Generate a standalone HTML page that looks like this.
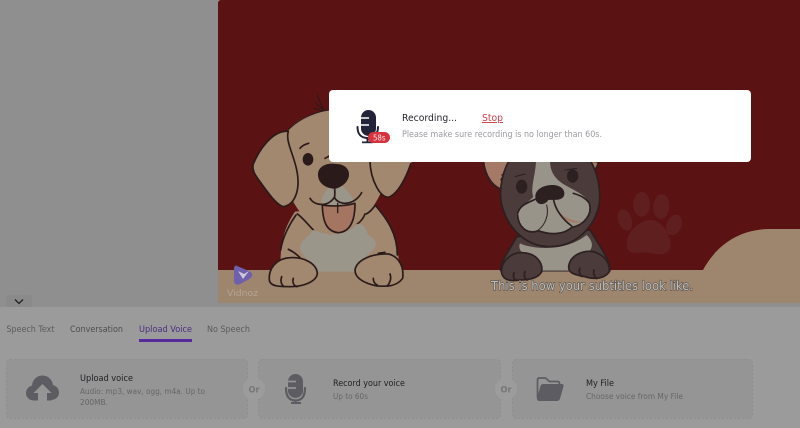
<!DOCTYPE html>
<html lang="en">
<head>
<meta charset="utf-8">
<title>Recording</title>
<style>
html,body{margin:0;padding:0;width:800px;height:428px;overflow:hidden;background:#9b9b9b}
svg{display:block;position:absolute;left:0;top:0}
text{font-family:"DejaVu Sans","Liberation Sans",sans-serif}
</style>
</head>
<body>
<svg width="800" height="428" viewBox="0 0 800 428" xmlns="http://www.w3.org/2000/svg">
<rect width="800" height="428" fill="#9b9b9b"/>
<rect width="800" height="307" fill="#8f8f8f"/>
<rect x="218" y="0" width="590" height="303" rx="3" fill="#5a1212"/>
<path d="M218 270H703C716 246 738 230 768 229H800V303H221Q218 303 218 300Z" fill="#9e856d"/>

<!-- paw print -->
<g transform="translate(470 140) scale(.3333)" fill="#601f1f">
<path d="M470 310C472 270 515 238 545 240C580 245 602 285 602 315C600 345 565 347 535 338C505 335 470 350 470 310Z"/>
<ellipse cx="465" cy="240" rx="20" ry="33" transform="rotate(-20 465 240)"/>
<ellipse cx="515" cy="193" rx="25" ry="37"/>
<ellipse cx="574" cy="200" rx="24" ry="37" transform="rotate(5 574 200)"/>
<ellipse cx="612" cy="255" rx="22" ry="32" transform="rotate(22 612 255)"/>
</g>

<!-- dog 1 -->
<g transform="translate(240 90) scale(.3333)" stroke="#2b1a1a" stroke-width="5" stroke-linejoin="round" stroke-linecap="round">
<path d="M165 365C135 410 118 455 122 545H478C478 450 445 385 405 345Z" fill="#a1886f" stroke="none"/>
<path d="M122 480C128 440 150 400 168 375M405 345C440 385 472 430 472 495" fill="none"/>
<path d="M140 125C175 80 235 60 300 60C370 62 430 100 450 170C455 250 420 330 380 375C345 425 260 430 215 400C180 375 150 330 135 270C120 220 122 160 140 125Z" fill="#a1886f" stroke="none"/>
<path d="M140 125C175 85 225 68 262 60" fill="none" stroke-width="3"/>
<path d="M145 124C135 155 165 200 172 250C180 300 165 345 130 350C110 345 85 310 60 275C45 255 35 240 40 222C55 185 95 120 145 124Z" fill="#a1886f"/>
<path d="M390 215C392 270 420 322 445 322C475 312 505 255 515 215L470 130L400 130Z" fill="#a1886f" stroke="none"/>
<path d="M390 215C392 270 420 322 445 322C475 312 500 258 512 222" fill="none"/>
<path d="M172 372C190 385 205 405 220 420M378 372C395 365 400 350 408 345M375 372C370 385 362 395 352 402" fill="none"/>
<path d="M232 15C238 30 245 48 252 60M225 38L250 58M222 55L250 62" fill="none" stroke-width="3"/>
<path d="M180 175C188 165 198 162 206 160" fill="none"/>
<ellipse cx="204" cy="208" rx="16" ry="19" fill="#2b1a1a" stroke="none"/>
<path d="M268 198L255 205" fill="none"/>
<path d="M270 288C255 305 240 325 248 345H345C340 320 325 305 305 285C298 295 285 300 270 288Z" fill="#9a9689" stroke="none"/>
<path d="M218 420C240 425 265 440 300 430C330 425 345 410 352 402C365 400 375 410 382 425C380 440 405 440 408 460C405 490 370 490 345 545H230C215 510 180 500 180 470C185 445 210 440 218 420Z" fill="#9a9689" stroke="none"/>
<path d="M247 345C248 395 260 425 295 428C335 425 345 385 345 340C320 348 270 350 247 345Z" fill="#a47560"/>
<path d="M293 340V368" fill="none" stroke-width="4"/>
<path d="M210 325C225 350 265 350 283 322C298 350 345 345 365 308" fill="none"/>
<path d="M284 295C285 310 285 318 283 325" fill="none"/>
<path d="M234 250C238 225 265 218 290 222C315 222 332 240 326 262C318 285 295 295 284 296C258 295 232 280 234 250Z" fill="#2b1a1a" stroke="none"/>
<path d="M88 570C85 535 110 505 150 503C190 500 230 520 232 550C230 575 190 590 150 590C120 590 90 590 88 570Z" fill="#a1886f"/>
<path d="M125 560C120 575 125 585 132 590M160 565C155 580 165 590 172 590" fill="none"/>
<path d="M145 478C160 485 172 495 180 503" fill="none"/>
<path d="M345 540C350 510 395 490 445 492C480 500 492 535 488 565C470 590 440 590 410 588C375 580 345 565 345 540Z" fill="#a1886f"/>
<path d="M400 565C400 575 405 582 412 585M450 552C455 565 450 578 442 588" fill="none"/>
<path d="M415 490L435 487" fill="none"/>
</g>

<!-- dog 2 -->
<g transform="translate(470 140) scale(.3333)" stroke="#2c2020" stroke-width="5" stroke-linejoin="round" stroke-linecap="round">
<path d="M40 60C45 110 70 145 105 150L125 60Z" fill="#a47a66"/>
<path d="M340 60L386 66C380 85 370 100 360 110Z" fill="#a47a66"/>
<path d="M92 120L120 70M95 105L115 95" fill="none" stroke-width="3"/>
<path d="M140 290C120 330 92 360 92 392H420C420 360 390 320 360 270Z" fill="#4b3b3b"/>
<path d="M118 60C90 110 85 170 100 210C120 270 170 320 240 320C320 320 375 260 388 190C392 150 385 100 360 60Z" fill="#4b3b3b"/>
<path d="M150 310C180 325 280 340 350 285C375 310 368 330 345 345C310 360 305 395 300 392H215C200 360 185 345 160 340C150 335 145 320 150 310Z" fill="#98948a" stroke="none"/>
<path d="M198 60H240C240 90 250 115 285 135C320 155 345 165 355 185C368 215 345 255 305 262C275 285 225 285 205 272C165 290 138 250 143 220C150 195 180 185 190 170C180 145 198 100 198 60Z" fill="#98948a" stroke="none"/>
<path d="M143 220C150 195 170 190 195 178M143 225C145 260 170 285 205 272C240 285 280 285 305 262C345 255 368 220 358 190C345 170 325 165 310 160" fill="none"/>
<path d="M230 195C238 225 225 255 205 270" fill="none" stroke-width="3"/>
<path d="M250 175C255 210 280 240 335 245C305 255 280 240 262 215C255 205 250 190 250 175Z" fill="#a47a66" stroke="none"/>
<path d="M250 175C255 210 280 240 305 258" fill="none"/>
<ellipse cx="155" cy="140" rx="17" ry="21" fill="#2c2020" stroke="none"/>
<ellipse cx="308" cy="108" rx="17" ry="20" fill="#2c2020" stroke="none"/>
<path d="M135 110L165 102M285 90L320 85" fill="none" stroke-width="3"/>
<path d="M196 170C196 145 225 135 248 135C272 135 288 150 282 168C272 185 245 178 235 180C222 200 195 195 196 170Z" fill="#2c2020" stroke="none"/>
<path d="M95 400C90 365 125 335 160 338C195 340 220 365 215 395C205 415 175 420 150 420C120 425 100 420 95 400Z" fill="#4b3b3b"/>
<path d="M132 398C128 410 132 418 138 420M165 395C160 408 165 418 172 420" fill="none"/>
<path d="M296 380C300 345 340 330 370 335C405 345 420 370 418 395C405 415 375 420 345 410C315 405 295 400 296 380Z" fill="#4b3b3b"/>
<path d="M330 385C325 395 330 405 336 410M372 390C368 402 375 412 380 416" fill="none"/>
</g>

<!-- subtitle -->
<text x="491" y="290" font-size="12.500" fill="#3a3a3a" stroke="#3a3a3a" stroke-width="1.200" textLength="202" lengthAdjust="spacingAndGlyphs" opacity=".7">This is how your subtitles look like.</text>
<text x="491" y="290" font-size="12.500" fill="#bdbdbd" textLength="202" lengthAdjust="spacingAndGlyphs">This is how your subtitles look like.</text>

<!-- watermark -->
<path d="M237 267L249 272C252 274 252 276 249 278L240 283C236 285 235 283 235 280V269C235 267 236 266 237 267Z" fill="#6f60ab" stroke="#6f60ab" stroke-width="2" stroke-linejoin="round"/>
<path d="M238 271L243 279L249 271L244 274Z" fill="#cfc8dc"/>
<text x="227" y="296" font-size="9" fill="#b3a596" textLength="31" lengthAdjust="spacingAndGlyphs">Vidnoz</text>

<!-- collapse tab -->
<path d="M6 307V298Q6 295 9 295H29Q32 295 32 298V307Z" fill="#8a8a8a"/>
<path d="M15 299.500L19 303.500L23 299.500" fill="none" stroke="#222" stroke-width="1.300"/>

<!-- tabs -->
<g font-size="8.800">
<text x="6.500" y="332" fill="#5b5b5b" textLength="48" lengthAdjust="spacingAndGlyphs">Speech Text</text>
<text x="70" y="332" fill="#4d4d4d" textLength="53" lengthAdjust="spacingAndGlyphs">Conversation</text>
<text x="139" y="332" fill="#4b2d7e" textLength="53" lengthAdjust="spacingAndGlyphs">Upload Voice</text>
<text x="207" y="332" fill="#5b5b5b" textLength="43" lengthAdjust="spacingAndGlyphs">No Speech</text>
</g>
<rect x="139" y="339" width="53" height="3" fill="#562a9c"/>

<!-- cards -->
<g fill="#959595" stroke="#8e8e8e" stroke-width="1" stroke-dasharray="2 2">
<rect x="6.500" y="359.500" width="241" height="59" rx="4"/>
<rect x="258.500" y="359.500" width="242" height="59" rx="4"/>
<rect x="512.500" y="359.500" width="240" height="59" rx="4"/>
</g>
<circle cx="254" cy="389" r="11" fill="#9c9c9c"/>
<circle cx="506" cy="389" r="11" fill="#9c9c9c"/>
<text x="248.500" y="392.500" font-size="8.500" font-weight="bold" fill="#767676" textLength="11" lengthAdjust="spacingAndGlyphs">Or</text>
<text x="500.500" y="392.500" font-size="8.500" font-weight="bold" fill="#767676" textLength="11" lengthAdjust="spacingAndGlyphs">Or</text>

<!-- upload icon -->
<g fill="#5c5c62">
<circle cx="42.500" cy="386" r="10.500"/>
<circle cx="33.500" cy="393" r="7.500"/>
<circle cx="51.500" cy="392.500" r="7.500"/>
<rect x="33.500" y="390" width="18" height="10.500"/>
</g>
<path d="M42.500 384L51.500 393H47V401H38V393H33.500Z" fill="#959595"/>
<text x="80" y="381" font-size="8.800" fill="#1e1e22" textLength="53" lengthAdjust="spacingAndGlyphs">Upload voice</text>
<text x="80" y="394" font-size="8" fill="#666" textLength="125" lengthAdjust="spacingAndGlyphs">Audio: mp3, wav, ogg, m4a. Up to</text>
<text x="80" y="405" font-size="8" fill="#666" textLength="28" lengthAdjust="spacingAndGlyphs">200MB.</text>

<!-- record icon -->
<rect x="288" y="374" width="15" height="24" rx="7.500" fill="#5c5c62"/>
<path d="M288 381.500H296M288 388H296" stroke="#959595" stroke-width="1.700" fill="none"/>
<path d="M286 388C286 396 289 400.500 295.500 400.500C302 400.500 305 396 305 388" fill="none" stroke="#5c5c62" stroke-width="2.200" stroke-linecap="round"/>
<rect x="294.500" y="400" width="2" height="3" fill="#5c5c62"/>
<rect x="291" y="402" width="10" height="2" fill="#5c5c62"/>
<text x="333" y="386" font-size="8.800" fill="#1e1e22" textLength="72" lengthAdjust="spacingAndGlyphs">Record your voice</text>
<text x="333" y="399" font-size="8" fill="#666" textLength="35" lengthAdjust="spacingAndGlyphs">Up to 60s</text>

<!-- folder icon -->
<path d="M537.500 398V380Q537.500 378 539.500 378H545.500L549.500 381.500H557.500Q559.500 381.500 559.500 383.500V385" fill="none" stroke="#5c5c62" stroke-width="1.700"/>
<path d="M540 401Q536.500 401 537 398L540.500 386Q541 384 543.500 384H561.500Q564 384 563.500 386.500L560 398.500Q559.500 401 556.500 401Z" fill="#5c5c62"/>
<text x="586" y="386" font-size="8.800" fill="#1e1e22" textLength="28" lengthAdjust="spacingAndGlyphs">My File</text>
<text x="586" y="399" font-size="8" fill="#666" textLength="97" lengthAdjust="spacingAndGlyphs">Choose voice from My File</text>

<!-- dialog -->
<rect x="329" y="90" width="422" height="72" rx="4" fill="#fff"/>
<rect x="361" y="110" width="15" height="26" rx="7.500" fill="#23233a"/>
<path d="M361 118H369M361 125H369" stroke="#fff" stroke-width="1.600" fill="none"/>
<path d="M357.500 127C357.500 134 361 138 367.500 138C374 138 378 134 378 127" fill="none" stroke="#23233a" stroke-width="2" stroke-linecap="round"/>
<rect x="366.500" y="137.500" width="2" height="4" fill="#23233a"/>
<rect x="362" y="141.500" width="11" height="1.700" fill="#23233a"/>
<rect x="368" y="132" width="22" height="11" rx="5.500" fill="#d5343f"/>
<text x="373" y="140.500" font-size="7.500" fill="#fbe4e6" textLength="12.500" lengthAdjust="spacingAndGlyphs">58s</text>
<text x="402" y="121" font-size="9.500" fill="#24242c" textLength="55" lengthAdjust="spacingAndGlyphs">Recording...</text>
<text x="482" y="121" font-size="9.500" fill="#cf3d4a" text-decoration="underline" textLength="21" lengthAdjust="spacingAndGlyphs">Stop</text>
<text x="402" y="137" font-size="8.600" fill="#9a9aa0" textLength="200" lengthAdjust="spacingAndGlyphs">Please make sure recording is no longer than 60s.</text>
</svg>
</body>
</html>
